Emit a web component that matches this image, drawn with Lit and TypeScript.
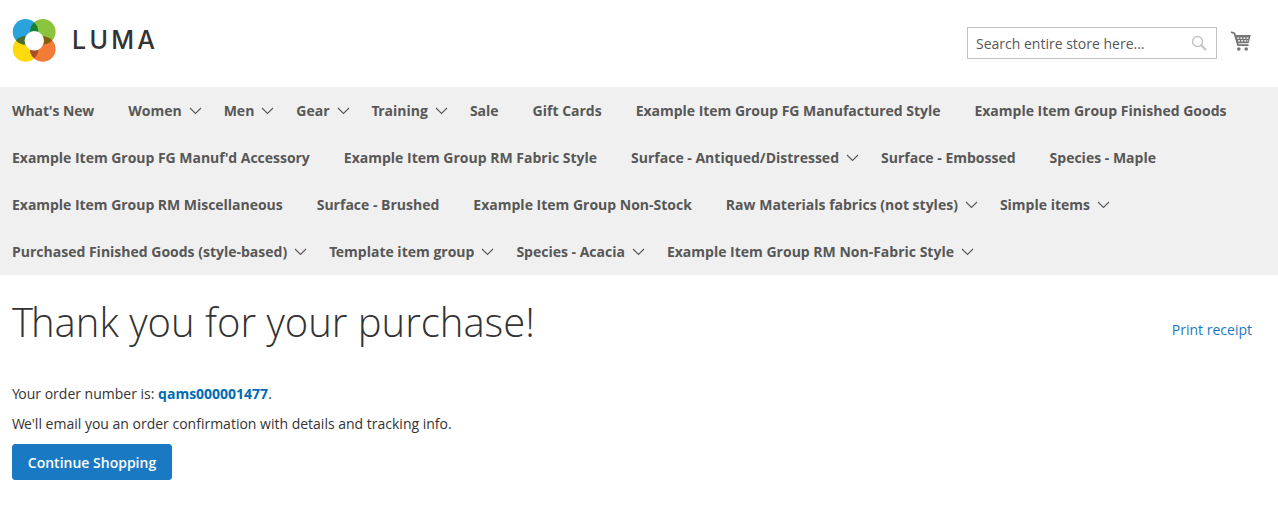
import { LitElement, html, css, svg } from "lit";
import { customElement } from "lit/decorators.js";

/* [label, has submenu, total width correction in px to match the reference's kerning] */
const ITEMS: [string, boolean, number][] = [
  ["What's New", false, -1], ["Women", true, 0], ["Men", true, 0], ["Gear", true, 0], ["Training", true, -1.5], ["Sale", false, 0], ["Gift Cards", false, 0],
  ["Example Item Group FG Manufactured Style", false, -1], ["Example Item Group Finished Goods", false, 0],
  ["Example Item Group FG Manuf'd Accessory", false, -1], ["Example Item Group RM Fabric Style", false, 0],
  ["Surface - Antiqued/Distressed", true, 0], ["Surface - Embossed", false, 0], ["Species - Maple", false, 0],
  ["Example Item Group RM Miscellaneous", false, -1], ["Surface - Brushed", false, 0], ["Example Item Group Non-Stock", false, 0],
  ["Raw Materials fabrics (not styles)", true, 0], ["Simple items", true, 0],
  ["Purchased Finished Goods (style-based)", true, 0], ["Template item group", true, -1.5], ["Species - Acacia", true, 0],
  ["Example Item Group RM Non-Fabric Style", true, 0],
];

const chevron = svg`<svg class="chev" width="13" height="8" viewBox="0 0 13 8"><path d="M1 1l5.5 5.5L12 1" fill="none" stroke="#575757" stroke-width="1.1"/></svg>`;

@customElement("app-root")
export class AppRoot extends LitElement {
  static styles = css`
    :host { display: block; width: 1278px; height: 526px; overflow: hidden; background: #fff; font-family: "Open Sans", sans-serif; color: #333; font-size: 14px; }
    .head { height: 87px; display: flex; align-items: flex-start; padding: 0 27px 0 12px; box-sizing: border-box; }
    .logo { display: flex; align-items: center; margin-top: 18px; height: 44px; gap: 16px; }
    .logo svg { isolation: isolate; }
    .logo circle.c { mix-blend-mode: multiply; }
    .logo span { font-family: "Inter", sans-serif; font-size: 25px; letter-spacing: 3.3px; color: #333; font-weight: 500; }
    .search { margin-left: auto; margin-top: 27px; width: 250px; height: 32px; box-sizing: border-box; border: 1px solid #c2c2c2; display: flex; align-items: center; justify-content: space-between; padding: 0 9px 0 8px; color: #575757; }
    .cart { margin-left: 13px; margin-top: 31px; }
    nav { background: #f0f0f0; display: flex; flex-wrap: wrap; }
    .item { height: 47px; display: flex; align-items: center; padding: 0 12px; margin-right: 10px; font-weight: 700; color: #575757; white-space: nowrap; }
    .item.parent { padding-right: 0; margin-right: 0; }
    .k { display: inline-block; }
    .chev { margin-left: 7px; margin-right: 10px; }
    main { padding: 0 26px 0 12px; }
    .title { display: flex; justify-content: space-between; align-items: flex-start; }
    h1 { margin: 22px 0 0; font-size: 40px; font-weight: 300; line-height: 50px; color: #333; }
    h1 .k { margin-right: -2px; }
    .print { color: #1979c3; margin-top: 45px; line-height: 20px; }
    p { margin: 0; line-height: 20px; }
    .num { margin-top: 37px; }
    .num .k { margin-right: -1.5px; }
    .num b { color: #006bb4; font-weight: 700; }
    .mail { margin-top: 10px; }
    .mail .k { margin-right: -1px; }
    .btn { margin-top: 10px; width: 160px; height: 36px; background: #1979c3; color: #fff; font-weight: 600; border-radius: 3px; display: flex; align-items: center; justify-content: center; border: 1px solid #1979c3; box-sizing: border-box; }
  `;

  private label(t: string, adj: number) {
    if (!adj) return html`<span>${t}</span>`;
    if (t[0] === "T") return html`<span><span class="k" style="margin-right:${adj}px">T</span>${t.slice(1)}</span>`;
    return html`<span style="letter-spacing:${adj / t.length}px">${t}</span>`;
  }

  render() {
    return html`
      <div class="head">
        <div class="logo">
          <svg width="44" height="44" viewBox="0 0 44 44">
            <circle class="c" cx="13.5" cy="13.8" r="12.8" fill="#2aa3dc"/>
            <circle class="c" cx="30.8" cy="13.8" r="12.8" fill="#8bc53f"/>
            <circle class="c" cx="13.5" cy="31" r="12.8" fill="#fdd90e"/>
            <circle class="c" cx="30.8" cy="31" r="12.8" fill="#f47b37"/>
            <path d="M4.06 22.4A12.8 12.8 0 0 1 22.94 22.4A12.8 12.8 0 0 1 4.06 22.4z" fill="#46702c"/>
            <path d="M22.15 21.56A12.8 12.8 0 0 1 22.15 40.44A12.8 12.8 0 0 1 22.15 21.56z" fill="#a5522a"/>
            <circle cx="22.3" cy="22.8" r="9.7" fill="#fff"/>
          </svg>
          <span>LUMA</span>
        </div>
        <div class="search">
          <span>Search entire store here...</span>
          <svg width="16" height="16" viewBox="0 0 16 16"><circle cx="6.5" cy="6.5" r="5" fill="none" stroke="#c2c2c2" stroke-width="1.4"/><path d="M10 10l5 5" stroke="#c2c2c2" stroke-width="1.8"/></svg>
        </div>
        <svg class="cart" width="21" height="20" viewBox="0 0 21 20">
          <path d="M1 1l3.5 1.4L8 14.2h10.5" fill="none" stroke="#757575" stroke-width="1.7"/>
          <path d="M4.5 4H20.8l-2.2 8.2H7z" fill="#757575"/>
          <path d="M7.2 7.2H19M8 9.9h10.2" stroke="#fff" stroke-width="1.2" stroke-dasharray="2 1.1"/>
          <circle cx="8.8" cy="18" r="1.8" fill="#757575"/><circle cx="16.2" cy="18" r="1.8" fill="#757575"/>
        </svg>
      </div>
      <nav>
        ${ITEMS.map(([t, c, adj]) => html`<div class="item ${c ? "parent" : ""}">${this.label(t, adj)}${c ? chevron : ""}</div>`)}
      </nav>
      <main>
        <div class="title"><h1><span class="k">T</span>hank you for your purchase!</h1><div class="print">Print receipt</div></div>
        <p class="num"><span class="k">Y</span>our order number is: <b>qams000001477</b>.</p>
        <p class="mail"><span class="k">W</span>e'll email you an order confirmation with details and tracking info.</p>
        <div class="btn">Continue Shopping</div>
      </main>
    `;
  }
}
